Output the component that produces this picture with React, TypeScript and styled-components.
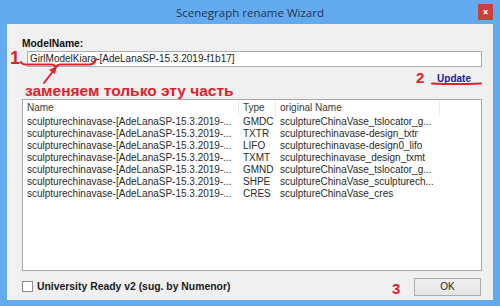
import styled, { createGlobalStyle } from 'styled-components';

const GlobalStyle = createGlobalStyle`
  html, body {
    margin: 0;
    padding: 0;
  }
  body {
    width: 500px;
    height: 306px;
    overflow: hidden;
    background: #64aaee;
  }
`;

const UI_FONT = `"Liberation Sans", Arial, sans-serif`;
const RED = '#e0212b';

const Window = styled.div`
  position: relative;
  box-sizing: border-box;
  width: 500px;
  height: 306px;
  display: flex;
  flex-direction: column;
  padding: 0 7px 6px 7px;
  background: #64aaee;
  font-family: ${UI_FONT};
`;

const TitleBar = styled.div`
  position: relative;
  height: 24px;
  display: flex;
  align-items: center;
  justify-content: center;
  font-family: "Open Sans", "Noto Sans", sans-serif;
  font-size: 11.5px;
  color: #1d3554;
`;

const CloseButton = styled.div`
  position: absolute;
  right: 0;
  top: 4px;
  width: 15px;
  height: 16px;
  display: flex;
  align-items: center;
  justify-content: center;
  background: #c9413b;
  color: #fff;
  font-size: 10px;
  font-weight: bold;
`;

const Panel = styled.div`
  flex: 1;
  display: flex;
  flex-direction: column;
  padding: 0 11px 0 15px;
  background: #f0f0f0;
`;

const FieldLabel = styled.div`
  margin-top: 14px;
  font-size: 10.3px;
  font-weight: bold;
  line-height: 12px;
  color: #111;
`;

const TextInput = styled.div`
  box-sizing: border-box;
  margin: 1px 0 0 5px;
  height: 16px;
  padding: 0 2px;
  border: 1px solid #abadb3;
  background: #fff;
  font-size: 10px;
  line-height: 14px;
  color: #222;
  white-space: nowrap;
`;

const LinkRow = styled.div`
  margin-top: 4px;
  padding-right: 11px;
  text-align: right;
  line-height: 12px;
`;

const Link = styled.span`
  font-size: 10px;
  font-weight: bold;
  color: #2222a3;
  text-decoration: underline;
`;

const ListBox = styled.div`
  box-sizing: border-box;
  margin-top: 14px;
  height: 172px;
  border: 1px solid #a8a8a8;
  background: #fff;
`;

const ListRow = styled.div<{ $header?: boolean }>`
  display: grid;
  grid-template-columns: 216px 37px 164px 1fr;
  height: ${p => (p.$header ? '16px' : '12px')};
  line-height: ${p => (p.$header ? '16px' : '12px')};
  font-size: 10px;
  color: ${p => (p.$header ? '#3a3a3a' : '#2a2a2a')};
  white-space: nowrap;
`;

const Cell = styled.div<{ $header?: boolean }>`
  overflow: hidden;
  padding-left: 4px;
  border-right: ${p => (p.$header ? '1px solid #ececec' : 'none')};
`;

const Footer = styled.div`
  flex: 1;
  display: flex;
  align-items: center;
  justify-content: space-between;
  padding-top: 2px;
`;

const CheckLabel = styled.label`
  display: flex;
  align-items: center;
  gap: 4px;
  font-size: 10.4px;
  font-weight: bold;
  color: #1a1a1a;
`;

const CheckBox = styled.span`
  box-sizing: border-box;
  width: 11px;
  height: 11px;
  border: 1px solid #8a8a8a;
  background: #fff;
`;

const Button = styled.div`
  box-sizing: border-box;
  width: 67px;
  height: 18px;
  margin-right: 1px;
  display: flex;
  align-items: center;
  justify-content: center;
  border: 1px solid #acacac;
  background: linear-gradient(#f0f0f0, #e5e5e5);
  font-size: 10px;
  color: #222;
`;

const Marker = styled.span<{ $size: number }>`
  position: absolute;
  font-family: ${UI_FONT};
  font-weight: bold;
  font-size: ${p => p.$size}px;
  line-height: 1;
  color: ${RED};
`;

const Note = styled.span`
  position: absolute;
  left: 25px;
  top: 83px;
  font-family: ${UI_FONT};
  font-weight: bold;
  font-size: 15.5px;
  line-height: 1;
  color: ${RED};
  white-space: nowrap;
`;

const Scribbles = styled.svg`
  position: absolute;
  left: 0;
  top: 0;
  pointer-events: none;
`;

const rows = [
  ['GMDC', 'sculptureChinaVase_tslocator_g...'],
  ['TXTR', 'sculpturechinavase-design_txtr'],
  ['LIFO', 'sculpturechinavase-design0_lifo'],
  ['TXMT', 'sculpturechinavase_design_txmt'],
  ['GMND', 'sculptureChinaVase_tslocator_g...'],
  ['SHPE', 'sculptureChinaVase_sculpturech...'],
  ['CRES', 'sculptureChinaVase_cres'],
];

const App = () => {
  return (
    <>
      <GlobalStyle />
      <Window>
        <TitleBar>
          Scenegraph rename Wizard
          <CloseButton>×</CloseButton>
        </TitleBar>
        <Panel>
          <FieldLabel>ModelName:</FieldLabel>
          <TextInput>GirlModelKiara-[AdeLanaSP-15.3.2019-f1b17]</TextInput>
          <LinkRow>
            <Link>Update</Link>
          </LinkRow>
          <ListBox>
            <ListRow $header>
              <Cell $header>Name</Cell>
              <Cell $header>Type</Cell>
              <Cell $header>original Name</Cell>
              <Cell />
            </ListRow>
            {rows.map(([type, original], i) => (
              <ListRow key={i}>
                <Cell>sculpturechinavase-[AdeLanaSP-15.3.2019-...</Cell>
                <Cell>{type}</Cell>
                <Cell>{original}</Cell>
                <Cell />
              </ListRow>
            ))}
          </ListBox>
          <Footer>
            <CheckLabel>
              <CheckBox />
              University Ready v2 (sug. by Numenor)
            </CheckLabel>
            <Button>OK</Button>
          </Footer>
        </Panel>

        <Scribbles width="500" height="306" viewBox="0 0 500 306">
          <g fill="none" stroke={RED} strokeWidth="2" strokeLinecap="round" strokeLinejoin="round">
            <path d="M21 62 Q22 65 28 64.5 L52 64.5 Q55 65 56 67 Q57 65 60 64.5 L90 64.5 Q95 64 96 59" />
            <path d="M44 83 L54 70" />
            <path d="M432 83.5 Q456 84.5 481 83.5" />
          </g>
          <path d="M57 66 L49 70 L55 74 Z" fill={RED} />
        </Scribbles>
        <Marker $size={18} style={{ left: 10, top: 49 }}>1</Marker>
        <Marker $size={15} style={{ left: 416, top: 70 }}>2</Marker>
        <Marker $size={15} style={{ left: 392, top: 281 }}>3</Marker>
        <Note>заменяем только эту часть</Note>
      </Window>
    </>
  );
};

export default App;
